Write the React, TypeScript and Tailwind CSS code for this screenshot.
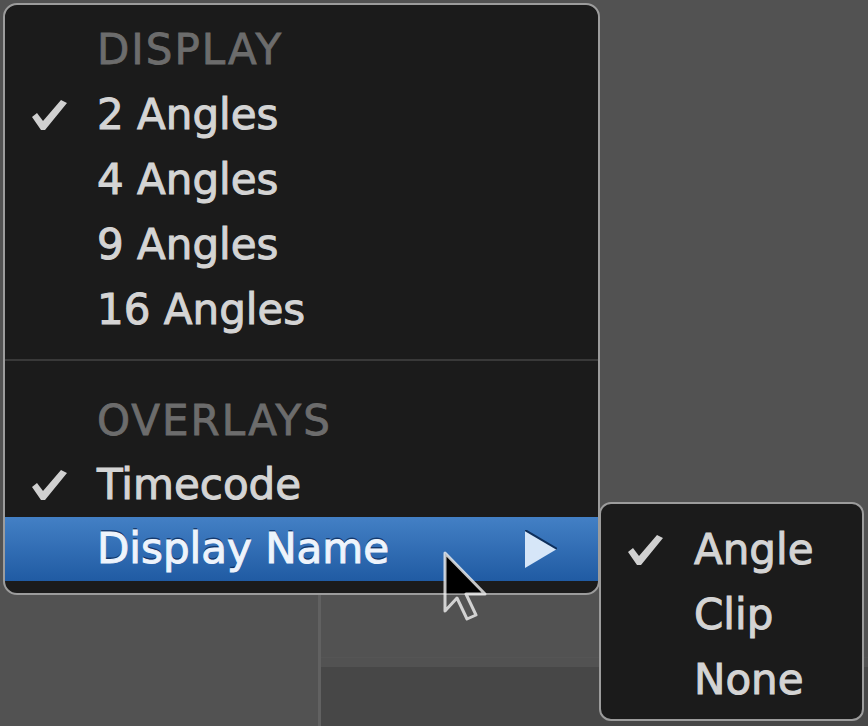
import React from 'react'

type Row = {
  label: string
  checked?: boolean
  header?: boolean
  highlighted?: boolean
  submenu?: boolean
  height: string
}

const displayRows: Row[] = [
  { label: 'DISPLAY', header: true, height: 'h-[65px]' },
  { label: '2 Angles', checked: true, height: 'h-[65px]' },
  { label: '4 Angles', height: 'h-[65px]' },
  { label: '9 Angles', height: 'h-[65px]' },
  { label: '16 Angles', height: 'h-[65px]' }
]

const overlayRows: Row[] = [
  { label: 'OVERLAYS', header: true, height: 'h-[64px]' },
  { label: 'Timecode', checked: true, height: 'h-[64px]' },
  {
    label: 'Display Name',
    highlighted: true,
    submenu: true,
    height: 'h-[64px]'
  }
]

const nameRows: Row[] = [
  { label: 'Angle', checked: true, height: 'h-[65px]' },
  { label: 'Clip', height: 'h-[65px]' },
  { label: 'None', height: 'h-[65px]' }
]

function Check() {
  return (
    <svg width="35" height="30" viewBox="0 0 35 30" className="block">
      <path d="M0 17 L5 13 L11 21 L29 0 L35 3 L13 30 L9 30 Z" fill="#d0d0d0" />
    </svg>
  )
}

function Arrow() {
  return (
    <svg width="32" height="38" viewBox="0 0 32 38" className="block">
      <path d="M0 0 L32 19 L0 38 Z" fill="#d6e6f8" />
      <path d="M0 0 L32 19" stroke="#0d2f5c" strokeWidth="2" />
    </svg>
  )
}

function Cursor() {
  return (
    <svg width="48" height="72" viewBox="0 0 48 72" className="block">
      <defs>
        <linearGradient id="fade" x1="0" y1="0" x2="0" y2="1">
          <stop offset="0.6" stopColor="#000" stopOpacity="1" />
          <stop offset="0.62" stopColor="#000" stopOpacity="0" />
        </linearGradient>
      </defs>
      <path
        d="M2 2 L2 60 L14 47 L24 68 L33 64 L23 43 L42 43 Z"
        fill="url(#fade)"
        stroke="#f2f2f2"
        strokeOpacity="0.8"
        strokeWidth="3"
        strokeLinejoin="round"
      />
    </svg>
  )
}

function MenuRow({ row, textPad, checkPad }: { row: Row; textPad: string; checkPad: string }) {
  const bg = row.highlighted
    ? 'bg-gradient-to-b from-[#4380c5] to-[#205ba3]'
    : ''
  const color = row.header
    ? 'text-[#6c6c6c] tracking-[2px] [-webkit-text-stroke:0.8px_#6c6c6c]'
    : row.highlighted
      ? 'text-[#eef4fc] [-webkit-text-stroke:1px_#eef4fc] [text-shadow:0_-2px_0_rgba(0,20,60,0.6)]'
      : 'text-[#d4d4d4] [-webkit-text-stroke:1px_#d4d4d4]'
  return (
    <div className={`flex items-center ${row.height} ${bg}`}>
      <div className={`flex shrink-0 items-center ${textPad} ${checkPad}`}>
        {row.checked && <Check />}
      </div>
      <span className={`text-[42px] leading-none whitespace-nowrap ${color}`}>
        {row.label}
      </span>
      {row.submenu && (
        <>
          <div className="flex-1" />
          <div className="pr-[41px]">
            <Arrow />
          </div>
        </>
      )}
    </div>
  )
}

export default function App() {
  return (
    <div className="relative h-[726px] w-[868px] overflow-hidden bg-[#525252] font-['DejaVu_Sans',sans-serif]">
      {/* app behind the menus */}
      <div className="flex h-full flex-col">
        <div className="h-[595px]" />
        <div className="flex flex-1">
          <div className="w-[318px]" />
          <div className="w-[3px] bg-[#616161]" />
          <div className="flex flex-1 flex-col">
            <div className="h-[63px] border-b border-[#555555]" />
            <div className="h-[9px]" />
            <div className="flex-1 bg-[#474747]" />
          </div>
        </div>
      </div>

      {/* main menu */}
      <div className="absolute left-[3px] top-[3px] w-[597px] overflow-hidden rounded-[14px] border-2 border-[#9c9c9c] bg-[#1b1b1b] pt-[12px] pb-[12px]">
        {displayRows.map((r) => (
          <MenuRow key={r.label} row={r} textPad="w-[92px]" checkPad="pl-[27px]" />
        ))}
        <div className="pt-[17px] pb-[28px]">
          <div className="h-[2px] bg-[#393939]" />
        </div>
        {overlayRows.map((r) => (
          <MenuRow key={r.label} row={r} textPad="w-[92px]" checkPad="pl-[27px]" />
        ))}
      </div>

      {/* submenu */}
      <div className="absolute left-[599px] top-[502px] w-[265px] overflow-hidden rounded-[12px] border-2 border-[#9c9c9c] bg-[#1b1b1b] pt-[13px] pb-[7px]">
        {nameRows.map((r) => (
          <MenuRow key={r.label} row={r} textPad="w-[93px]" checkPad="pl-[27px]" />
        ))}
      </div>

      <div className="absolute left-[443px] top-[551px]">
        <Cursor />
      </div>
    </div>
  )
}
